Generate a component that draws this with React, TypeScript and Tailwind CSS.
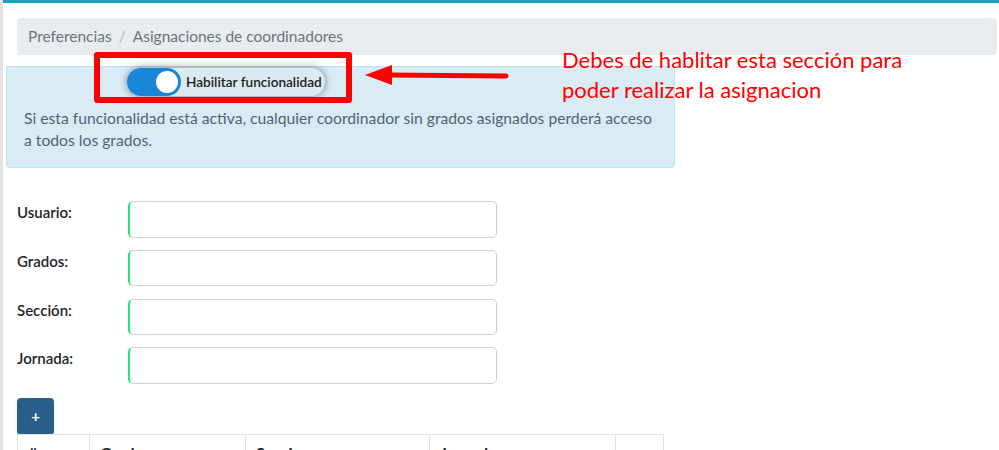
import { useState } from "react";

const fields = ["Usuario:", "Grados:", "Sección:", "Jornada:"];
const columns = [
  { label: "#", w: "w-[72px]" },
  { label: "Grado", w: "w-[156px]" },
  { label: "Seccion", w: "w-[184px]" },
  { label: "Jornada", w: "w-[186px]" },
  { label: "", w: "w-[48px]" },
];

export default function App() {
  const [enabled, setEnabled] = useState(true);

  return (
    <div className="relative h-[450px] w-[999px] overflow-hidden bg-white font-['Lato',sans-serif] border-l-[3px] border-[#e4e4e4]">
      <div className="h-[3px] bg-[#17a2b8]" />

      <div className="ml-[14px] mr-[2px] mt-[15px] flex h-[37px] items-center rounded-[4px] bg-[#e9ecef] px-[11px] text-[15.5px] text-[#6c757d]">
        <span>Preferencias</span>
        <span className="px-[7px] text-[#b5bcc2]">/</span>
        <span>Asignaciones de coordinadores</span>
      </div>

      <div className="ml-[3px] mt-[11px] h-[102px] w-[669px] rounded-b-[4px] border border-[#bde3ef] bg-[#d9ecf5] pt-[1px]">
        <div className="ml-[120px] flex h-[28px] w-[198px] items-center rounded-full bg-[#dbe9f1] shadow-[0_0_8px_rgba(0,0,0,0.45)]">
          <button
            onClick={() => setEnabled(!enabled)}
            className={`relative h-[28px] w-[54px] rounded-full ${enabled ? "bg-[#1a86d8]" : "bg-gray-300"}`}
          >
            <span
              className={`absolute top-[3px] h-[22px] w-[22px] rounded-full bg-white ${enabled ? "left-[29px]" : "left-[3px]"}`}
            />
          </button>
          <span className="ml-[5px] text-[13.6px] font-semibold text-[#222]">Habilitar funcionalidad</span>
        </div>
        <p className="ml-[17px] mt-[11px] text-[15.7px] leading-[22px] text-[#526474]">
          Si esta funcionalidad está activa, cualquier coordinador sin grados asignados perderá acceso
          <br />a todos los grados.
        </p>
      </div>

      <div className="ml-[14px] mt-[33px] flex flex-col gap-[12.3px]">
        {fields.map((f) => (
          <div key={f} className="flex items-start">
            <label className="w-[111px] text-[15px] leading-[22px] font-semibold text-[#212529]">{f}</label>
            <input className="h-[36.5px] w-[369px] rounded-[5px] border border-[#cfcfcf] border-l-2 border-l-[#22e57a] outline-none" />
          </div>
        ))}
      </div>

      <div className="ml-[14px] mt-[14px]">
        <button className="flex h-[36px] w-[37px] items-center justify-center rounded-t-[4px] rounded-b-[2px] bg-[#2b5f8b] text-[15px] font-bold text-white">
          +
        </button>
        <table className="border-collapse border border-[#dee2e6] text-[16px] font-bold text-[#212529]">
          <thead>
            <tr>
              {columns.map((c, i) => (
                <th key={i} className={`${c.w} border border-[#dee2e6] px-[10px] pt-[8px] pb-[10px] text-left leading-[20px]`}>
                  {c.label}
                </th>
              ))}
            </tr>
          </thead>
        </table>
      </div>

      {/* annotation overlay */}
      <div className="absolute left-[91px] top-[52px] h-[51px] w-[258px] rounded-[3px] border-[6px] border-[#ff0000]" />
      <svg className="absolute left-[355px] top-[60px]" width="160" height="32" viewBox="0 0 160 32">
        <line x1="28" y1="15" x2="148" y2="16" stroke="#ff0000" strokeWidth="5" strokeLinecap="round" />
        <polygon points="7,15 34,5 34,25" fill="#ff0000" />
      </svg>
      <div className="absolute left-[559px] top-[45px] font-['Lato',sans-serif] text-[22px] leading-[30px] text-[#ff0000]">
        Debes de hablitar esta sección para
        <br />
        poder realizar la asignacion
      </div>
    </div>
  );
}
